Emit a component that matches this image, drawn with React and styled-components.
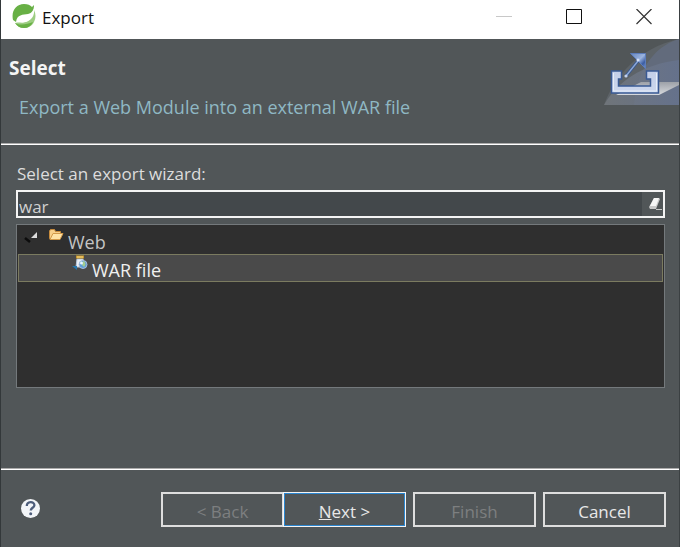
import React, { useState } from "react";
import styled, { createGlobalStyle } from "styled-components";

const GlobalStyle = createGlobalStyle`
  * {
    box-sizing: border-box;
  }

  body {
    margin: 0;
    background-color: #515658;
    font-family: "Open Sans", "Noto Sans CJK KR", sans-serif;
    font-size: 17px;
  }

  button,
  input {
    font: inherit;
  }
`;

const Dialog = styled.form`
  display: flex;
  flex-direction: column;
  min-height: 100vh;
  border-left: 1px solid #33383a;
  border-right: 1px solid #3b4042;
  color: #dddddd;
`;

const TitleBar = styled.header`
  display: flex;
  align-items: flex-start;
  height: 39px;
  padding: 4px 0 0 11px;
  background-color: #fff;
  color: #111;
`;

const Title = styled.h1`
  flex: 1;
  margin: 0;
  padding-left: 5px;
  font-size: 17px;
  font-weight: 400;
  line-height: 28px;
`;

const WindowButtons = styled.div`
  display: flex;
`;

const WindowButton = styled.button`
  display: flex;
  align-items: center;
  justify-content: center;
  width: 70px;
  height: 26px;
  padding: 0;
  border: 0;
  background: none;
`;

const Banner = styled.section`
  display: flex;
  justify-content: space-between;
  height: 106px;
  padding-left: 8px;
  border-bottom: 2px groove #fff;
`;

const BannerTitle = styled.h2`
  margin: 0;
  padding-top: 16px;
  color: #f4f4f4;
  font-size: 19px;
  font-weight: 700;
  line-height: 26px;
`;

const BannerText = styled.p`
  margin: 0;
  padding: 13px 0 0 10px;
  color: #8fb8c4;
  font-size: 18px;
  line-height: 26px;
`;

const Content = styled.main`
  display: flex;
  flex: 1;
  flex-direction: column;
  padding: 16px 14px 80px 15px;
`;

const Label = styled.label`
  margin-bottom: 3px;
  padding-left: 1px;
  line-height: 26px;
`;

const FilterBox = styled.div`
  display: flex;
  height: 28px;
  border: 2px solid #f4f4f4;
  background-color: #43484b;
`;

const FilterInput = styled.input`
  flex: 1;
  min-width: 0;
  padding: 4px 1px 0;
  border: 0;
  outline: 0;
  background: none;
  color: #d0d0d0;
`;

const ClearButton = styled.button`
  display: flex;
  align-items: center;
  justify-content: flex-end;
  width: 21px;
  padding: 0;
  border: 0;
  background-color: #515658;
`;

const Tree = styled.ul`
  flex: 1;
  min-height: 120px;
  margin: 6px 0 0;
  padding: 1px;
  border: 1px solid #74797c;
  background-color: #2f2f2f;
  list-style: none;
`;

const Group = styled.ul`
  margin: 0;
  padding: 0;
  list-style: none;
`;

const Row = styled.div`
  display: flex;
  height: 28px;
  padding-left: ${(props) => (props.$level ? 53 : 5)}px;
  border: 1px solid ${(props) => (props.$selected ? "#7b7b60" : "transparent")};
  background-color: ${(props) => (props.$selected ? "#4a4a4a" : "transparent")};
  color: ${(props) => (props.$selected ? "#f0f0f0" : "#c4c4c4")};
`;

const RowText = styled.span`
  padding: 3px 0 0 4px;
  font-size: 18px;
  line-height: 24px;
`;

const Twistie = styled.svg`
  flex: none;
  margin: 3px 10px 0 0;
`;

const Footer = styled.footer`
  display: flex;
  align-items: flex-start;
  justify-content: space-between;
  height: 79px;
  padding: 22px 13px 0 19px;
  border-top: 2px groove #fff;
`;

const HelpButton = styled.button`
  display: flex;
  margin-top: 6px;
  padding: 0;
  border: 0;
  background: none;
`;

const Actions = styled.div`
  display: flex;
  gap: 7px;
`;

const ButtonPair = styled.div`
  display: flex;
`;

const Button = styled.button`
  width: 123px;
  height: 35px;
  padding: 4px 0 0;
  border: 2px solid #dedede;
  background-color: #515658;
  color: #e8e8e8;
  line-height: 24px;

  &:disabled {
    color: #7d7f80;
  }
`;

const DefaultButton = styled(Button)`
  margin-left: -1px;
  border: 1px solid #f4f4f4;
  box-shadow: inset 0 0 0 1px #2b86d0;
`;

const SpringLogo = () => (
  <svg width="25" height="25" viewBox="0 0 25 25" aria-hidden="true">
    <path
      d="M1 16C-1 7 4 0 12 0c4 0 6 1 8 3l2-2c0 5-2 8-6 9-5 1-11 0-12 8Z"
      fill="#68b045"
    />
    <path
      d="M3 19c3-1 7 0 11-1 4-2 7-6 8-12 2 4 2 8 0 12-2 4-6 6-10 6-4 0-7-2-9-5Z"
      fill="#9dcd82"
    />
    <path d="M3 19c6 3 12 1 18-1-2 4-5 6-9 6s-7-2-9-5Z" fill="#68b045" />
    <path
      d="M5 18c1-5 6-5 10-6 4-1 6-4 7-7 1 7-3 12-9 13-3 1-5 0-8 0Z"
      fill="#fff"
    />
  </svg>
);

const ExportPicture = () => (
  <svg width="75" height="66" viewBox="0 0 75 66" aria-hidden="true">
    <defs>
      <linearGradient id="sweep" x1="0" x2="1">
        <stop offset="0" stopColor="#74797e" />
        <stop offset="1" stopColor="#66738f" />
      </linearGradient>
      <linearGradient id="tray" x1="0" y1="0" x2="0" y2="1">
        <stop offset="0" stopColor="#c3cee8" />
        <stop offset="1" stopColor="#ccd7ee" />
      </linearGradient>
      <linearGradient id="shade" x1="0" y1="0" x2="0" y2="1">
        <stop offset="0" stopColor="#9da1a8" />
        <stop offset="1" stopColor="#d8dade" />
      </linearGradient>
      <linearGradient id="head" x1="0" x2="1" y1="0" y2="1">
        <stop offset="0" stopColor="#6585bd" />
        <stop offset=".5" stopColor="#9ab3de" />
        <stop offset=".75" stopColor="#3a5ca3" />
        <stop offset="1" stopColor="#7f9bd0" />
      </linearGradient>
    </defs>
    <path d="M0 66C10 38 34 9 75 0v66Z" fill="#697078" opacity=".5" />
    <path d="M30 66C32 35 48 8 75 0v66Z" fill="#66718a" opacity=".6" />
    <path d="M0 66C12 44 38 25 75 21v45Z" fill="url(#sweep)" opacity=".8" />
    <path d="M37 43h38v3L55 56H12Z" fill="url(#shade)" />
    <g transform="translate(1 0)">
      <path
        d="M6.500 32h10v8h-3v7h32v-7h-4v-8h12v22h-47Z"
        fill="url(#tray)"
        stroke="#395994"
        strokeWidth="1.500"
      />
      <path d="M8.500 34v18h43V34" fill="none" stroke="#e6edf9" />
      <path d="m21 37 12-15" stroke="#36578f" strokeWidth="3" />
      <path d="m21 37 12-15" stroke="#8ca7d5" strokeWidth="1.400" />
      <circle cx="21" cy="37" r="1.600" fill="#c4d2ed" />
      <path d="M25.500 14.500h15v15Z" fill="url(#head)" stroke="#5c7dbb" />
      <circle cx="33" cy="21" r="1.500" fill="#d3dff5" />
    </g>
  </svg>
);

const FolderIcon = () => (
  <svg width="16" height="15" viewBox="0 0 16 15" aria-hidden="true">
    <path
      d="M1.500 11.500V4l1-1.500h4l1 2h5v7Z"
      fill="#f8d08a"
      stroke="#c78b3c"
    />
    <path d="m2 12.500 3-6h10l-3 6Z" fill="#ffe3a6" stroke="#d29a4a" />
  </svg>
);

const WarIcon = () => (
  <svg width="16" height="16" viewBox="0 0 16 16" aria-hidden="true">
    <path d="M5 4h6l1 8H4Z" fill="#edf2f8" stroke="#b4c6dc" />
    <path d="M4 2h8" stroke="#c8962a" strokeWidth="3" />
    <path d="M5 2h6" stroke="#ffe38b" />
    <circle cx="11" cy="9.500" r="4" fill="#5f9ed8" stroke="#a9bfdc" />
    <path d="M11 6c3 1 3 4 1 6l-2-2Z" fill="#a4ce91" />
    <circle cx="9.500" cy="8" r="1.500" fill="#e8f6ff" />
    <path d="m0 11 5 4v-4Z" fill="#2676ac" />
  </svg>
);

const App = () => {
  const [filter, setFilter] = useState("war");

  const onSubmit = (event) => {
    event.preventDefault();
  };

  return (
    <>
      <GlobalStyle />
      <Dialog onSubmit={onSubmit}>
        <TitleBar>
          <SpringLogo />
          <Title>Export</Title>
          <WindowButtons>
            <WindowButton type="button" aria-label="Minimize">
              <svg width="16" height="16" viewBox="0 0 16 16">
                <path d="M0 7.500h16" stroke="#c8c8c8" />
              </svg>
            </WindowButton>
            <WindowButton type="button" aria-label="Maximize">
              <svg width="16" height="16" viewBox="0 0 16 16">
                <path d="M.5.500h15v14H.5Z" fill="none" stroke="#111" />
              </svg>
            </WindowButton>
            <WindowButton type="button" aria-label="Close">
              <svg width="16" height="16" viewBox="0 0 16 16">
                <path
                  d="m.5 0 15 15M15.500 0l-15 15"
                  stroke="#333"
                  strokeWidth="1.200"
                />
              </svg>
            </WindowButton>
          </WindowButtons>
        </TitleBar>

        <Banner>
          <div>
            <BannerTitle>Select</BannerTitle>
            <BannerText>Export a Web Module into an external WAR file</BannerText>
          </div>
          <ExportPicture />
        </Banner>

        <Content>
          <Label htmlFor="filter">Select an export wizard:</Label>
          <FilterBox>
            <FilterInput
              id="filter"
              type="text"
              value={filter}
              onChange={(event) => setFilter(event.target.value)}
            />
            <ClearButton
              type="button"
              aria-label="Clear"
              onClick={() => setFilter("")}
            >
              <svg width="15" height="14" viewBox="0 0 15 14">
                <path d="M6 1h5l1 1-4 10H2l-1-2Z" fill="#c8c8c8" />
                <path d="M6 1h5L8 9H2Z" fill="#f6f6f6" />
                <path d="M8 12.500h6" stroke="#c8c8c8" />
              </svg>
            </ClearButton>
          </FilterBox>

          <Tree role="tree" aria-label="Export wizards">
            <li role="treeitem" aria-expanded="true">
              <Row>
                <Twistie width="14" height="14" viewBox="0 0 14 14">
                  <path d="M13 2v6H7Z" fill="#dcdcdc" />
                  <path d="m1 8 5 4" stroke="#0c0c0c" strokeWidth="2.500" />
                </Twistie>
                <FolderIcon />
                <RowText>Web</RowText>
              </Row>
              <Group role="group">
                <li role="treeitem" aria-selected="true">
                  <Row $level={1} $selected>
                    <WarIcon />
                    <RowText>WAR file</RowText>
                  </Row>
                </li>
              </Group>
            </li>
          </Tree>
        </Content>

        <Footer>
          <HelpButton type="button" aria-label="Help">
            <svg width="21" height="21" viewBox="0 0 21 21">
              <circle cx="10.500" cy="10.500" r="9.500" fill="#f3f5f8" />
              <path
                d="M6.800 8c0-5 7.600-5 7.600-.8 0 2.600-3.600 2.600-3.600 5.300"
                fill="none"
                stroke="#4d5d7b"
                strokeWidth="2.300"
              />
              <circle cx="10.700" cy="15.700" r="1.500" fill="#4d5d7b" />
            </svg>
          </HelpButton>
          <Actions>
            <ButtonPair>
              <Button type="button" disabled>
                &lt; Back
              </Button>
              <DefaultButton type="submit">
                <u>N</u>ext &gt;
              </DefaultButton>
            </ButtonPair>
            <Button type="button" disabled>
              Finish
            </Button>
            <Button type="button">Cancel</Button>
          </Actions>
        </Footer>
      </Dialog>
    </>
  );
};

export default App;
